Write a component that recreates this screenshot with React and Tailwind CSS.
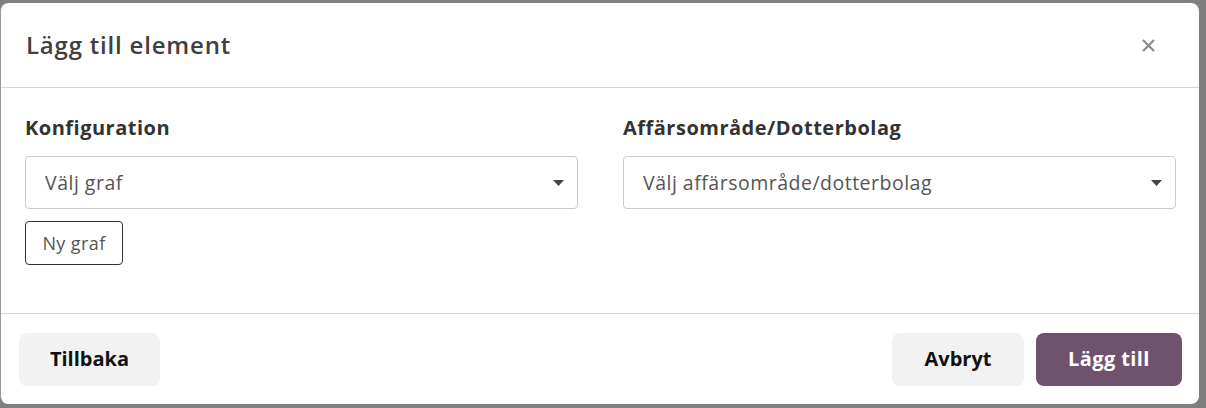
import React from "react";

function Caret() {
  return (
    <svg width="11" height="6" viewBox="0 0 11 6" className="shrink-0">
      <path d="M0 0h11L5.5 6z" fill="#444" />
    </svg>
  );
}

function SelectBox({ placeholder }) {
  return (
    <div className="h-[53px] w-full rounded-[4px] border border-[#cccccc] bg-white pl-[19px] pr-[13px] flex items-center justify-between">
      <span className="text-[19.5px] tracking-[0.5px] text-[#555555]">{placeholder}</span>
      <Caret />
    </div>
  );
}

export default function App() {
  return (
    <div
      className="w-[1206px] h-[408px] bg-[#7f7f7f] pt-[3px] pr-[7px] pb-[4px]"
      style={{ fontFamily: "'Open Sans', 'Noto Sans', sans-serif" }}
    >
      <div className="h-full w-[1199px] bg-white rounded-[8px] flex flex-col border-l border-[#9a9a9a]">
        {/* Header */}
        <div className="h-[85px] shrink-0 flex items-center justify-between pl-[25px] pr-[44px] border-b border-[#d4d4d4]">
          <h1 className="text-[24px] font-semibold tracking-[0.8px] text-[#404040]">
            Lägg till element
          </h1>
          <button className="text-[#8a8a8a]">
            <svg width="13" height="13" viewBox="0 0 13 13">
              <path d="M1 1l11 11M12 1L1 12" stroke="currentColor" strokeWidth="2.2" />
            </svg>
          </button>
        </div>

        {/* Body */}
        <div className="flex-1 grid grid-cols-2 gap-[45px] pl-[24px] pr-[23px] pt-[27px]">
          <div className="flex flex-col">
            <label className="text-[20px] font-bold tracking-[0.5px] text-[#333333] leading-[26px] mb-[15px]">
              Konfiguration
            </label>
            <SelectBox placeholder="Välj graf" />
            <button className="mt-[12px] self-start h-[44px] w-[98px] rounded-[4px] border border-[#333333] text-[18px] tracking-[0.4px] text-[#555555]">
              Ny graf
            </button>
          </div>
          <div className="flex flex-col">
            <label className="text-[20px] font-bold tracking-[0.5px] text-[#333333] leading-[26px] mb-[15px]">
              Affärsområde/Dotterbolag
            </label>
            <SelectBox placeholder="Välj affärsområde/dotterbolag" />
          </div>
        </div>

        {/* Footer */}
        <div className="h-[91px] shrink-0 border-t border-[#d4d4d4] flex items-center justify-between pl-[18px] pr-[17px]">
          <button className="h-[53px] w-[141px] rounded-[8px] bg-[#f2f2f2] text-[20px] font-bold text-[#111111]">
            Tillbaka
          </button>
          <div className="flex gap-[12px]">
            <button className="h-[53px] w-[132px] rounded-[8px] bg-[#f2f2f2] text-[20px] font-bold text-[#111111]">
              Avbryt
            </button>
            <button className="h-[53px] w-[146px] rounded-[8px] bg-[#6f536d] text-[20px] font-bold tracking-[0.4px] text-white">
              Lägg till
            </button>
          </div>
        </div>
      </div>
    </div>
  );
}
